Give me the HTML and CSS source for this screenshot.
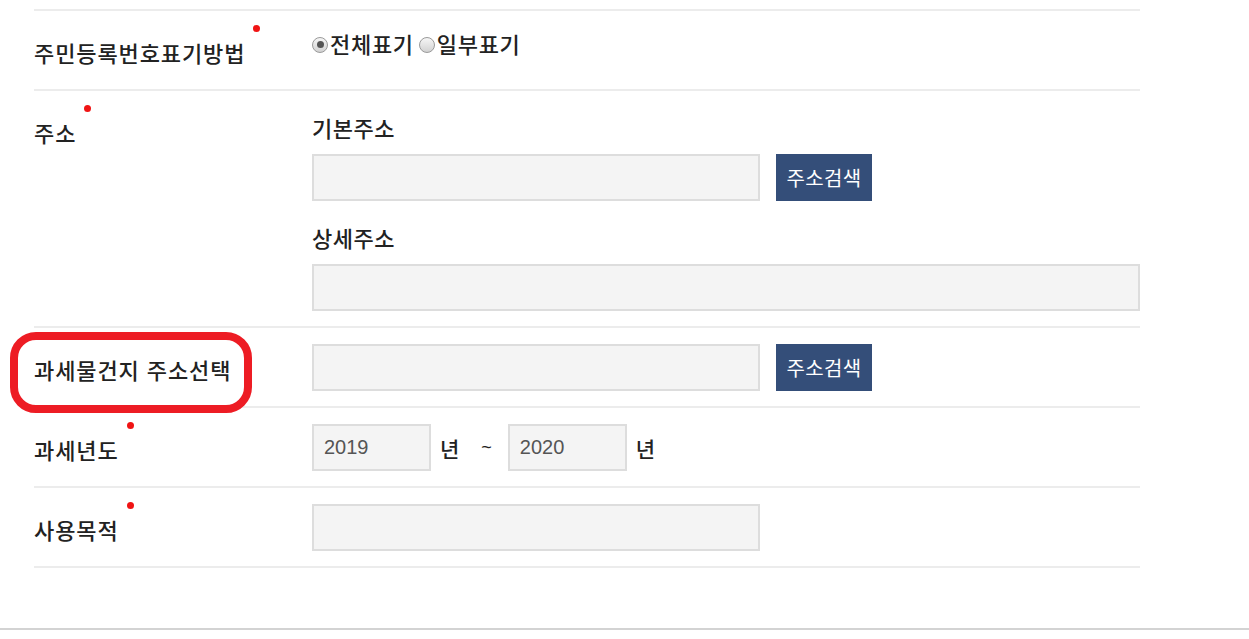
FILE: index.html
```html
<!DOCTYPE html>
<html lang="ko">
<head>
<meta charset="utf-8">
<title>신청서</title>
<link rel="stylesheet" href="styles.css">
</head>
<body>
<div class="form">
  <div class="row">
    <div class="label"><span class="req">주민등록번호표기방법</span></div>
    <div class="value radios">
      <label class="radio-item"><span class="radio checked"></span>전체표기</label>
      <label class="radio-item"><span class="radio"></span>일부표기</label>
    </div>
  </div>
  <div class="row">
    <div class="label"><span class="req">주소</span></div>
    <div class="value addr">
      <div class="sublabel">기본주소</div>
      <div class="line">
        <input class="field w-mid" type="text" readonly>
        <button class="btn" type="button">주소검색</button>
      </div>
      <div class="sublabel second">상세주소</div>
      <div class="line">
        <input class="field w-full" type="text" readonly>
      </div>
    </div>
  </div>
  <div class="row">
    <div class="label"><span>과세물건지 주소선택</span></div>
    <div class="value">
      <div class="line">
        <input class="field w-mid" type="text" readonly>
        <button class="btn" type="button">주소검색</button>
      </div>
    </div>
  </div>
  <div class="row">
    <div class="label"><span class="req">과세년도</span></div>
    <div class="value">
      <div class="line">
        <input class="field w-year" type="text" value="2019" readonly>
        <span class="unit">년</span>
        <span class="tilde">~</span>
        <input class="field w-year" type="text" value="2020" readonly>
        <span class="unit">년</span>
      </div>
    </div>
  </div>
  <div class="row last">
    <div class="label"><span class="req">사용목적</span></div>
    <div class="value">
      <div class="line">
        <input class="field w-mid" type="text" readonly>
      </div>
    </div>
  </div>
</div>
<div class="page-bottom"></div>
<div class="highlight"></div>
</body>
</html>
```
FILE: styles.css
```css
html, body {
  margin: 0;
  padding: 0;
  background: #ffffff;
}
body {
  font-family: "Noto Sans CJK KR", "Noto Sans", sans-serif;
  color: #222222;
  padding-top: 9px;
}
.form {
  margin-left: 34px;
  width: 1106px;
}
.row {
  display: grid;
  grid-template-columns: 278px 1fr;
  border-top: 2px solid #ececec;
}
.row.last {
  border-bottom: 2px solid #ececec;
}
.label {
  padding: 26px 0 22px;
  font-size: 22px;
  line-height: 30px;
  font-weight: 500;
  letter-spacing: 0.9px;
  white-space: nowrap;
}
.req {
  position: relative;
}
.req::after {
  content: "";
  position: absolute;
  left: calc(100% + 8px);
  top: -11px;
  width: 7px;
  height: 7px;
  border-radius: 50%;
  background: #f01414;
}
.value {
  padding: 16px 0 15px;
}
.radios {
  padding-top: 19px;
  display: flex;
  align-items: center;
  height: 26px;
  font-size: 22px;
  line-height: 26px;
  font-weight: 500;
  letter-spacing: 0.7px;
}
.radio-item {
  display: inline-flex;
  align-items: center;
  margin-right: 5px;
}
.radio {
  box-sizing: border-box;
  width: 16px;
  height: 16px;
  border-radius: 50%;
  border: 1px solid #9a9a9a;
  background: linear-gradient(#f6f6f6, #d2d2d2);
  margin-right: 2px;
  margin-top: 3px;
  position: relative;
}
.radio.checked::after {
  content: "";
  position: absolute;
  left: 3.5px;
  top: 3.5px;
  width: 7px;
  height: 7px;
  border-radius: 50%;
  background: #555555;
}
.addr {
  padding-top: 21px;
}
.sublabel {
  font-size: 22px;
  line-height: 30px;
  font-weight: 500;
  letter-spacing: 0.5px;
  margin-bottom: 12px;
}
.sublabel.second {
  margin-top: 21px;
}
.line {
  display: flex;
  align-items: center;
}
.field {
  box-sizing: border-box;
  height: 47px;
  border: 2px solid #dddddd;
  background: #f4f4f4;
  padding: 0 10px;
  font-family: "Liberation Sans", Arial, sans-serif;
  font-size: 20px;
  color: #555555;
  outline: none;
  margin: 0;
}
.w-mid { width: 448px; }
.w-full { width: 828px; }
.w-year { width: 119px; }
.btn {
  margin-left: 16px;
  width: 96px;
  height: 47px;
  border: none;
  background: #344e79;
  color: #ffffff;
  font-family: "Noto Sans CJK KR", sans-serif;
  font-size: 20px;
  letter-spacing: 0.4px;
  padding: 0;
}
.unit {
  margin-left: 9px;
  font-size: 21px;
  font-weight: 500;
}
.tilde {
  margin-left: 22px;
  margin-right: 16px;
  font-family: "Liberation Sans", sans-serif;
  font-size: 18px;
}
.page-bottom {
  margin-top: 60px;
  height: 2px;
  background: #d3d3d3;
}
.highlight {
  position: absolute;
  left: 10px;
  top: 332px;
  width: 242px;
  height: 81px;
  box-sizing: border-box;
  border: 8px solid #ed1c24;
  border-radius: 26px;
}
```
